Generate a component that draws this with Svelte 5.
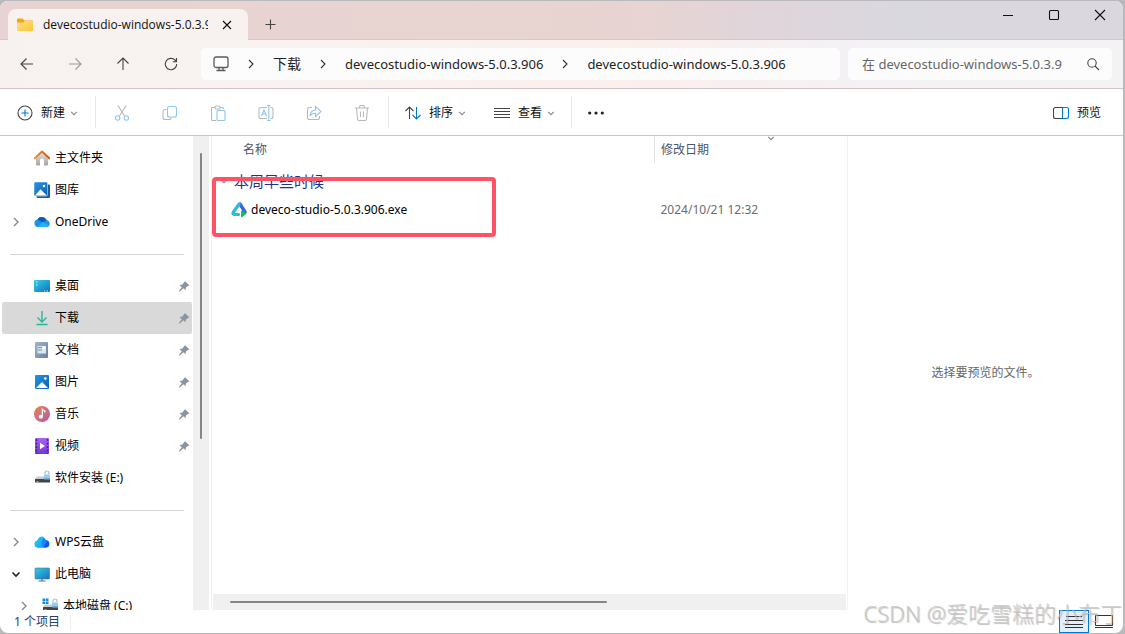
<script>
  const folder = 'devecostudio-windows-5.0.3.906';
  const crumbs = ['下载', folder, folder];
  const home = [
    { icon: 'home', label: '主文件夹' },
    { icon: 'gallery', label: '图库' },
    { icon: 'onedrive', label: 'OneDrive', arrow: 'right' }
  ];
  const pinned = [
    { icon: 'desktop', label: '桌面', pin: true },
    { icon: 'download', label: '下载', pin: true, active: true },
    { icon: 'document', label: '文档', pin: true },
    { icon: 'pictures', label: '图片', pin: true },
    { icon: 'music', label: '音乐', pin: true },
    { icon: 'video', label: '视频', pin: true },
    { icon: 'drive', label: '软件安装 (E:)' }
  ];
  const places = [
    { icon: 'wps', label: 'WPS云盘', arrow: 'right' },
    { icon: 'pc', label: '此电脑', arrow: 'down' },
    { icon: 'system', label: '本地磁盘 (C:)', arrow: 'right', nested: true }
  ];
  const groups = [home, pinned, places];
  const tools = [
    ['cut', '剪切'],
    ['copy', '复制'],
    ['paste', '粘贴'],
    ['rename', '重命名'],
    ['share', '共享'],
    ['trash', '删除']
  ];
</script>

{#snippet chevron(kind)}
  <svg class="chev {kind}" viewBox="0 0 10 10" aria-hidden="true">
    {#if kind === 'right' || kind === 'crumb'}
      <path d="M3 1l4 4-4 4" />
    {:else}
      <path d="M1.5 3.5L5 7l3.5-3.5" />
    {/if}
  </svg>
{/snippet}

{#snippet glyph(name)}
  <svg class="glyph" viewBox="0 0 16 16" aria-hidden="true">
    {#if name === 'back'}
      <path d="M14 8H2M7.5 2.5L2 8l5.500 5.500" />
    {:else if name === 'forward'}
      <path d="M2 8h12M8.500 2.500L14 8l-5.500 5.500" />
    {:else if name === 'up'}
      <path d="M8 14V2M2.500 7.500L8 2l5.500 5.500" />
    {:else if name === 'refresh'}
      <path d="M13.700 8A5.700 5.700 0 1 1 12 4l1.500 1.500M13.500 2v3.700H9.800" />
    {:else if name === 'monitor'}
      <rect x="1" y="1" width="14" height="10.500" rx="2" stroke="#5a5a5a" stroke-width="1.300" />
      <path d="M6 12v2.500M10 12v2.500M3.500 14.500h9" stroke="#5a5a5a" stroke-width="1.300" />
    {:else if name === 'search'}
      <circle cx="7" cy="7" r="4.200" />
      <path d="M10 10l4 4" />
    {:else if name === 'new'}
      <circle cx="8" cy="8" r="7" />
      <path class="blue" d="M8 4.500v7M4.500 8h7" />
    {:else if name === 'cut'}
      <path d="M4 .5l6.500 10.500M12 .5L5.500 11" />
      <circle class="blue" cx="3.700" cy="13" r="2.200" /><circle class="blue" cx="12.300" cy="13" r="2.200" />
    {:else if name === 'copy'}
      <path d="M4.500 4.500H3a2 2 0 0 0-2 2v6a2 2 0 0 0 2 2h4a2 2 0 0 0 2-2" />
      <rect class="blue" x="5.500" y="1.500" width="9" height="10.500" rx="2" />
    {:else if name === 'paste'}
      <path d="M5 2.500H2.500a1 1 0 0 0-1 1v11a1 1 0 0 0 1 1H6M10 2.500h2.500a1 1 0 0 1 1 1V4" />
      <rect x="5" y="1" width="5" height="3" rx="1" />
      <rect class="blue" x="7" y="5.500" width="8" height="10" rx="1" />
    {:else if name === 'rename'}
      <path d="M9 2.500H3a2 2 0 0 0-2 2v7a2 2 0 0 0 2 2h6M12.500 2.500h.5a2 2 0 0 1 2 2v7a2 2 0 0 1-2 2h-.5" />
      <path class="blue" d="M3.500 11L6 5l2.500 6M4.400 9h3.200M10.800 1v14M9 .5h3.600M9 15.500h3.600" />
    {:else if name === 'share'}
      <path d="M6 2.500H3.500a2 2 0 0 0-2 2v8a2 2 0 0 0 2 2h8a2 2 0 0 0 2-2V11" />
      <path class="blue" d="M9.500 5V1.500L15 6.500l-5.500 5V8.300C7 8.300 5.300 9 4 11c.3-3.500 2-5.700 5.500-6z" />
    {:else if name === 'trash'}
      <path d="M1 3h14M5.500 3V2a1.500 1.500 0 0 1 1.500-1.500h2A1.500 1.500 0 0 1 10.500 2v1M2.500 3l1 11a1.500 1.500 0 0 0 1.500 1.500h6a1.500 1.500 0 0 0 1.500-1.500l1-11M6.500 6.500v5.500M9.500 6.500v5.500" />
    {:else if name === 'sort'}
      <path d="M4.500 14V2M.5 6l4-4 4 4" />
      <path class="blue" d="M11.500 2v12M7.500 10l4 4 4-4" />
    {:else if name === 'view'}
      <path d="M0 3.500h16M0 6.500h16M0 9.500h16M0 12.500h16" />
    {:else if name === 'more'}
      <g fill="#222" stroke="none"><circle cx="1.700" cy="8" r="1.600" /><circle cx="8" cy="8" r="1.600" /><circle cx="14.300" cy="8" r="1.600" /></g>
    {:else if name === 'preview'}
      <path d="M9.500 2.500H2.500a2 2 0 0 0-2 2v7a2 2 0 0 0 2 2h7" />
      <path class="blue" d="M9.500 2.500v11h4a2 2 0 0 0 2-2v-7a2 2 0 0 0-2-2z" />
    {:else if name === 'tabclose'}
      <path d="M4 4l8 8M12 4L4 12" />
    {:else if name === 'close'}
      <path d="M3 3l10 10M13 3L3 13" />
    {:else if name === 'min'}
      <path d="M3 8.500h10" />
    {:else if name === 'max'}
      <rect x="3.500" y="3.500" width="9" height="9" rx="1" />
    {:else if name === 'plus'}
      <path d="M8.500 3.500v10M3.500 8.500h10" />
    {/if}
  </svg>
{/snippet}

{#snippet picture(name)}
  <svg class="pic" viewBox="0 0 16 16" aria-hidden="true">
    {#if name === 'folder'}
      <path d="M0 2.500Q0 1.500 1 1.500h4.500l2 2H15q1 0 1 1V8H0z" fill="#f3a90c" />
      <path d="M0 6.500Q0 5.500 1 5.500h5.500l1.500-1.500h7q1 0 1 1v8q0 1-1 1H1q-1 0-1-1z" fill="url(#gFolder)" />
    {:else if name === 'home'}
      <path d="M2 7.500l6-5.500 6 5.500v7q0 1-1 1h-3V10.500a2 2 0 0 0-4 0v5H3q-1 0-1-1z" fill="url(#gWall)" />
      <path d="M.8 8.200L8 1.600l7.200 6.600" fill="none" stroke="url(#gRoof)" stroke-width="2" stroke-linejoin="round" stroke-linecap="round" />
    {:else if name === 'gallery'}
      <path d="M13 2.500h2q1 0 1 1V15q0 1-1 1H3.500q-1 0-1-1v-1z" fill="#175fa8" />
      <rect width="13.500" height="14" rx="1.200" fill="url(#gPhoto)" stroke="#fff" stroke-width=".5" />
      <path d="M1 13.500L6.500 7.200 12.800 13.500z" fill="#fff" /><circle cx="10" cy="4" r="1.300" fill="#fff" />
    {:else if name === 'onedrive'}
      <path d="M4 13a3.800 3.800 0 0 1-.6-7.500A5.300 5.300 0 0 1 12.700 6.300 3.400 3.400 0 0 1 13 13z" fill="#1a94e4" />
      <path d="M3.400 5.500A5.300 5.300 0 0 1 12.700 6.300L8.500 8.500z" fill="#0a5cb8" />
      <path d="M4 13h9a3.400 3.400 0 0 0 2.500-1.200L8.500 8z" fill="#2aaef2" />
    {:else if name === 'desktop'}
      <rect y="2" width="16" height="12" rx="1" fill="url(#gDesk)" />
      <path d="M2 4h1.500M2 7h1.500M10 13h1M12.500 13h1.500" stroke="#bff5ff" />
    {:else if name === 'download'}
      <path d="M8 1v10.500M3.500 7.500L8 12l4.500-4.500M2.500 14.500h11" fill="none" stroke="#28b69a" stroke-width="1.400" />
    {:else if name === 'document'}
      <rect x="1" width="13" height="16" rx="1" fill="url(#gDoc)" />
      <rect x="3.500" y="4" width="8.500" height="7.500" fill="#dbe6f2" />
      <path d="M4 5.500h4M4 8h4" stroke="#7d93ad" /><rect x="8.500" y="4.500" width="3" height="3" fill="#fff" />
    {:else if name === 'pictures'}
      <rect x="1" y="1" width="14" height="14" rx="1" fill="url(#gPhoto)" />
      <path d="M2 14l6-6 6 6z" fill="#fff" /><circle cx="11.300" cy="4.500" r="1.300" fill="#fff" />
    {:else if name === 'music'}
      <circle cx="8" cy="8" r="8" fill="url(#gMusic)" />
      <ellipse cx="6.800" cy="10.700" rx="2.200" ry="1.900" fill="#fff" /><path d="M8.300 10.500V3.500l2.500 1.500v1.500" fill="none" stroke="#fff" stroke-width="1.300" />
    {:else if name === 'video'}
      <rect x="1" width="14" height="16" rx="1" fill="url(#gVideo)" />
      <path d="M2.500 1v15M13.500 1v15" stroke="#4d2098" stroke-width="1.500" stroke-dasharray="2 1.500" /><path d="M6 4.800v6.400L11 8z" fill="#fff" />
    {:else if name === 'drive' || name === 'system'}
      {#if name === 'system'}
        <path d="M.5.500h2.700v2.500H.5zM3.800.500h2.700v2.500H3.800zM.5 3.600h2.700v2.500H.5zM3.800 3.600h2.700v2.500H3.800z" fill="#128de0" />
      {/if}
      <path d="M3 6.500h12l1 3v2.500H1V9z" fill="#c8ccd0" />
      <rect x="1" y="9" width="15" height="3.500" rx=".5" fill="#424548" /><rect x="2.500" y="11" width="2" height="1" fill="#41d477" />
      <path d="M11 4.500V3a2 2 0 0 1 4 0v1.500" fill="none" stroke="#a9bac7" stroke-width="1.200" />
      <rect x="10" y="4.500" width="6" height="5" rx=".8" fill="#9ccbe8" /><path d="M10 9h6" stroke="#338cd0" />
    {:else if name === 'wps'}
      <path d="M4 13.500a3.600 3.600 0 0 1-.5-7.100A4.600 4.600 0 0 1 12 6a3.800 3.800 0 0 1 .5 7.500z" fill="#1687fb" />
      <path d="M3.500 6.400a4.600 4.600 0 0 1 6.500-3.500Q6 7 9 13.500H4a3.600 3.600 0 0 1-.5-7.100z" fill="url(#gWps)" />
      <path d="M9 13.500l4-6.500a3.500 3.500 0 0 1-.5 6.500z" fill="#1555e6" />
    {:else if name === 'pc'}
      <rect x="1" y="2" width="14.500" height="11" rx=".8" fill="url(#gDesk)" stroke="#46778d" stroke-width=".6" />
      <path d="M8 13v2M4.500 15h7" stroke="#55717d" stroke-width="1.200" />
    {:else if name === 'app'}
      <path d="M9 2l5 8" fill="none" stroke="#3469da" stroke-width="3.400" stroke-linecap="round" />
      <path d="M8 2.200L2.400 10q-1.200 2.300.9 2.500h4.200" fill="none" stroke="#31bada" stroke-width="3.200" stroke-linejoin="round" stroke-linecap="round" />
      <path d="M10.500 9l4.700 2.500-4.700 3.500z" fill="#10c060" stroke="#10c060" stroke-linejoin="round" />
    {:else if name === 'pin'}
      <path d="M9.500 1.500l5.500 5.500-1.500 1-3 2-.5 3.500L7 11l-5 4.500-.8-.8L5 9.500 2 6.500l4-.5 2-3z" fill="#8a959f" />
    {/if}
  </svg>
{/snippet}

<svg class="defs" aria-hidden="true">
  <defs>
    <linearGradient id="gFolder" x2="1" y2="1"><stop stop-color="#ffe08c" /><stop offset="1" stop-color="#ffc52f" /></linearGradient>
    <linearGradient id="gWall" x2="0" y2="1"><stop stop-color="#e4e4e4" /><stop offset="1" stop-color="#a5a5a5" /></linearGradient>
    <linearGradient id="gRoof" x2="1"><stop stop-color="#f39432" /><stop offset="1" stop-color="#cf561c" /></linearGradient>
    <linearGradient id="gPhoto" x2="1" y2="1"><stop stop-color="#2595e4" /><stop offset="1" stop-color="#0a60b8" /></linearGradient>
    <linearGradient id="gDesk" x2="1" y2="1"><stop stop-color="#35cfe6" /><stop offset="1" stop-color="#1372ba" /></linearGradient>
    <linearGradient id="gDoc" x2="1" y2="1"><stop stop-color="#a3b7cc" /><stop offset="1" stop-color="#667f9e" /></linearGradient>
    <linearGradient id="gMusic" x2="1" y2="1"><stop stop-color="#ee8352" /><stop offset="1" stop-color="#af5ba8" /></linearGradient>
    <linearGradient id="gVideo" x2="0" y2="1"><stop stop-color="#a964ef" /><stop offset="1" stop-color="#7437d5" /></linearGradient>
    <linearGradient id="gWps" x2="1" y2="1"><stop stop-color="#28d8e4" /><stop offset="1" stop-color="#1499f5" /></linearGradient>
  </defs>
</svg>

<div class="desk">
  <div class="window">
    <header class="titlebar">
      <div class="tab">
        {@render picture('folder')}
        <span class="tabname">{folder}</span>
        <button class="tabclose" aria-label="关闭标签页">{@render glyph('tabclose')}</button>
      </div>
      <button class="newtab" aria-label="新标签页">{@render glyph('plus')}</button>
      <div class="winctl">
        <button aria-label="最小化">{@render glyph('min')}</button>
        <button aria-label="最大化">{@render glyph('max')}</button>
        <button aria-label="关闭">{@render glyph('close')}</button>
      </div>
    </header>

    <nav class="navbar" aria-label="导航">
      <div class="navbtns">
        <button aria-label="后退">{@render glyph('back')}</button>
        <button aria-label="前进" disabled>{@render glyph('forward')}</button>
        <button aria-label="向上">{@render glyph('up')}</button>
        <button aria-label="刷新">{@render glyph('refresh')}</button>
      </div>
      <div class="address">
        {@render glyph('monitor')}
        {#each crumbs as crumb}
          {@render chevron('crumb')}
          <button class:cjk={crumb === '下载'}>{crumb}</button>
        {/each}
      </div>
      <label class="search">
        <input type="text" placeholder="在 devecostudio-windows-5.0.3.9" aria-label="搜索" />
        {@render glyph('search')}
      </label>
    </nav>

    <div class="toolbar">
      <button class="cmd">{@render glyph('new')}<span>新建</span>{@render chevron('menu')}</button>
      <div class="tools">
        {#each tools as [icon, label]}
          <button class="tool" aria-label={label} disabled>{@render glyph(icon)}</button>
        {/each}
      </div>
      <div class="cmds">
        <button class="cmd">{@render glyph('sort')}<span>排序</span>{@render chevron('menu')}</button>
        <button class="cmd">{@render glyph('view')}<span>查看</span>{@render chevron('menu')}</button>
      </div>
      <button class="cmd" aria-label="更多">{@render glyph('more')}</button>
      <button class="cmd last">{@render glyph('preview')}<span>预览</span></button>
    </div>

    <div class="body">
      <aside class="sidebar">
        {#each groups as group, i}
          {#if i > 0}<hr />{/if}
          {#each group as item}
            <a href="#top" class="place" class:active={item.active} class:nested={item.nested}>
              <span class="arrow">{#if item.arrow}{@render chevron(item.arrow)}{/if}</span>
              {@render picture(item.icon)}
              <span class="name">{item.label}</span>
              {#if item.pin}<span class="pin">{@render picture('pin')}</span>{/if}
            </a>
          {/each}
        {/each}
      </aside>
      <div class="vtrack"><div class="vthumb"></div></div>

      <main class="files">
        <div class="list">
          <table>
            <thead>
              <tr>
                <th class="colname">名称</th>
                <th class="coldate">修改日期<span class="sortmark">{@render chevron('menu')}</span></th>
              </tr>
            </thead>
            <tbody>
              <tr class="group"><td colspan="2"><div class="cell">{@render chevron('menu')}<span>本周早些时候</span></div></td></tr>
              <tr class="file">
                <td><div class="cell">{@render picture('app')}<span>deveco-studio-5.0.3.906.exe</span></div></td>
                <td class="date">2024/10/21 12:32</td>
              </tr>
            </tbody>
          </table>
        </div>
        <div class="htrack"><div class="hthumb"></div></div>
        <div class="highlight"></div>
      </main>

      <section class="preview">选择要预览的文件。</section>
    </div>

    <footer class="status">
      <span class="count">1 个项目</span>
      <div class="modes">
        <button class="mode on" aria-label="详细信息">
          <svg viewBox="0 0 18 14" aria-hidden="true"><path d="M1 1.500h16M0 5.500h18M0 9.500h18M0 12.500h18" /></svg>
        </button>
        <button class="mode" aria-label="大图标">
          <svg viewBox="0 0 18 14" aria-hidden="true"><path d="M.5.500h17v10H.5zM0 12.500h18" /></svg>
        </button>
      </div>
    </footer>
  </div>
  <div class="watermark">CSDN @爱吃雪糕的小布丁</div>
</div>

<style>
  :global(body) {
    margin: 0;
  }
  .desk {
    position: relative;
    box-sizing: border-box;
    height: 100vh;
    padding: 1px 2px 1px 0;
    background: #b9b9bb;
    font: 12px/16px 'Noto Sans', 'Noto Sans CJK SC', sans-serif;
    color: #111;
    overflow: hidden;
  }
  .defs {
    position: absolute;
    width: 0;
    height: 0;
  }
  .window {
    display: flex;
    flex-direction: column;
    height: 100%;
    border-radius: 8px;
    background: #fff;
    overflow: hidden;
  }
  button {
    display: flex;
    align-items: center;
    justify-content: center;
    border: 0;
    padding: 0;
    background: none;
    font: inherit;
    color: inherit;
  }
  svg {
    flex: none;
    display: block;
  }
  .glyph {
    width: 16px;
    height: 16px;
    fill: none;
    stroke: #444;
    stroke-width: 1.1;
  }
  .glyph .blue {
    stroke: #0078d4;
  }
  .pic {
    width: 16px;
    height: 16px;
  }
  .chev {
    width: 10px;
    height: 10px;
    fill: none;
    stroke: #888;
    stroke-width: 1.4;
  }
  .chev.crumb {
    stroke: #333;
    stroke-width: 1.1;
  }
  .chev.down {
    stroke: #222;
    stroke-width: 1.6;
  }
  .chev.menu {
    width: 8px;
    height: 8px;
  }

  .titlebar {
    display: flex;
    height: 38px;
    padding-left: 8px;
    border-bottom: 1px solid #d6c6c8;
    background: linear-gradient(90deg, #e7d3d3 0%, #e8d4d0 45%, #e7d4d3 58%, #e0d5da 67%, #dad8df 80%, #dad8de 100%);
  }
  .tab {
    display: flex;
    align-items: center;
    width: 240px;
    height: 31px;
    margin-top: 8px;
    padding-left: 9px;
    box-sizing: border-box;
    border-radius: 8px 8px 0 0;
    background: #f7f1f0;
  }
  .tabname {
    width: 165px;
    margin-left: 10px;
    overflow: hidden;
    white-space: nowrap;
    font-family: 'Open Sans', sans-serif;
    font-weight: 500;
  }
  .tabclose {
    width: 37px;
    height: 30px;
  }
  .tabclose .glyph,
  .winctl .glyph {
    stroke: #111;
  }
  .newtab {
    width: 44px;
    margin-top: 8px;
  }
  .winctl {
    display: flex;
    height: 28px;
    margin-left: auto;
  }
  .winctl button {
    width: 46px;
  }

  .navbar {
    display: flex;
    align-items: center;
    height: 48px;
    padding: 0 11px 0 3px;
    gap: 8px;
    border-bottom: 1px solid #d5c3c4;
    background: linear-gradient(90deg, #f7f1f0 0%, #f8f2ef 35%, #faefed 58%, #f4f1f4 75%, #f3f3f3 90%);
  }
  .navbtns {
    display: flex;
  }
  .navbtns button {
    width: 48px;
    height: 32px;
  }
  .navbtns button:disabled {
    opacity: 0.5;
  }
  .address,
  .search {
    display: flex;
    align-items: center;
    box-sizing: border-box;
    height: 32px;
    border-radius: 5px;
    background: #fdfcfd;
    font-size: 13px;
  }
  .address {
    flex: 1;
    gap: 17px;
    margin-left: -2px;
    padding-left: 12px;
    overflow: hidden;
    white-space: nowrap;
    color: #222;
  }
  .address .cjk {
    font-size: 14px;
  }
  .search {
    width: 264px;
    padding: 0 11px 0 14px;
    gap: 8px;
  }
  .search input {
    flex: 1;
    min-width: 0;
    padding: 0;
    border: 0;
    outline: 0;
    background: none;
    font: inherit;
  }
  .search input::placeholder {
    color: #666;
    opacity: 1;
  }

  .toolbar {
    display: flex;
    align-items: center;
    height: 46px;
    padding: 0 22px 0 17px;
    border-bottom: 1px solid #d3c3c5;
    background: #fff;
  }
  .cmd {
    gap: 8px;
    height: 32px;
    padding-top: 2px;
    box-sizing: border-box;
    white-space: nowrap;
  }
  .cmd .chev {
    margin-left: -3px;
  }
  .tools,
  .cmds {
    display: flex;
    border-right: 1px solid #e8e8e8;
  }
  .tools {
    margin-left: 17px;
    border-left: 1px solid #e8e8e8;
    padding: 0 2px;
  }
  .tool {
    width: 48px;
    height: 32px;
    padding-top: 2px;
    box-sizing: border-box;
  }
  .tool .glyph {
    stroke: #b8b8b8;
  }
  .tool .glyph .blue {
    stroke: #8fc5ef;
  }
  .cmds {
    gap: 28px;
    padding: 0 16px;
    margin-right: 16px;
  }
  .last {
    margin-left: auto;
  }

  .body {
    display: flex;
    flex: 1;
    min-height: 0;
  }
  .sidebar {
    width: 193px;
    padding-top: 6px;
    box-sizing: border-box;
    overflow: hidden;
  }
  .sidebar hr {
    height: 1px;
    margin: 16px 9px 15px 10px;
    border: 0;
    background: #d4d4d4;
  }
  .place {
    display: flex;
    align-items: center;
    height: 32px;
    margin: 0 1px 0 2px;
    padding-left: 9px;
    border-radius: 2px;
    color: #000;
    text-decoration: none;
    white-space: nowrap;
  }
  .place.active {
    background: #d9d9d9;
  }
  .place.nested {
    padding-left: 17px;
  }
  .arrow {
    width: 23px;
  }
  .name {
    margin-left: 5px;
  }
  .pin {
    margin-left: auto;
  }
  .pin .pic {
    width: 12px;
    height: 12px;
    margin-right: 2px;
  }
  .vtrack {
    display: flex;
    justify-content: center;
    width: 16px;
    padding: 17px 0;
    box-sizing: border-box;
    background: #f0f0f0;
  }
  .vthumb {
    width: 2px;
    height: 65%;
    border-radius: 1px;
    background: #868686;
  }
  .files {
    position: relative;
    display: flex;
    flex: 1;
    flex-direction: column;
    min-width: 0;
    margin-left: 2px;
    border-left: 1px solid #f2f2f2;
    border-right: 1px solid #f2f2f2;
  }
  .list {
    flex: 1;
    overflow: hidden;
  }
  table {
    width: 100%;
    border-collapse: collapse;
    table-layout: fixed;
  }
  th,
  td {
    padding: 0;
    text-align: left;
    font-weight: 400;
  }
  th {
    height: 27px;
    color: #46566f;
  }
  .colname {
    padding-left: 31px;
  }
  .coldate {
    position: relative;
    width: 186px;
    padding-left: 6px;
    border-left: 1px solid #e2e2e2;
  }
  .sortmark {
    position: absolute;
    top: -2px;
    left: 112px;
  }
  .cell {
    display: flex;
    align-items: center;
    height: 28px;
  }
  .group .cell {
    gap: 6px;
    padding: 4px 0 1px 8px;
    font-size: 15px;
    color: #1f3192;
  }
  .file .cell {
    gap: 4px;
    padding-left: 19px;
    color: #000;
  }
  .date {
    padding-left: 6px;
    color: #6d6d6d;
  }
  .htrack {
    display: flex;
    align-items: center;
    height: 16px;
    margin: 0 1px;
    padding: 0 17px;
    background: #f0f0f0;
  }
  .hthumb {
    width: 63%;
    height: 2px;
    border-radius: 1px;
    background: #868686;
  }
  .highlight {
    position: absolute;
    top: 41px;
    left: 0;
    width: 284px;
    height: 60px;
    box-sizing: border-box;
    border: 4px solid #ff5264;
    border-radius: 4px;
    pointer-events: none;
  }
  .preview {
    display: flex;
    align-items: center;
    justify-content: center;
    width: 275px;
    color: #666;
  }

  .status {
    display: flex;
    align-items: center;
    justify-content: space-between;
    height: 23px;
    padding: 0 4px 0 14px;
    color: #24406b;
  }
  .count {
    padding-right: 10px;
    border-right: 1px solid #eee;
  }
  .modes {
    display: flex;
  }
  .mode {
    width: 30px;
    height: 23px;
    box-sizing: border-box;
  }
  .mode.on {
    border: 1px solid #0078d7;
    background: #e3f0fa;
  }
  .mode svg {
    width: 18px;
    height: 14px;
    fill: none;
    stroke: #333;
  }
  .watermark {
    position: absolute;
    right: 3px;
    bottom: 7px;
    font-size: 22px;
    font-weight: 300;
    line-height: 28px;
    color: rgba(196, 196, 196, 0.8);
    text-shadow: 1px 1px 1px rgba(110, 110, 110, 0.45);
    white-space: nowrap;
    pointer-events: none;
  }
</style>
